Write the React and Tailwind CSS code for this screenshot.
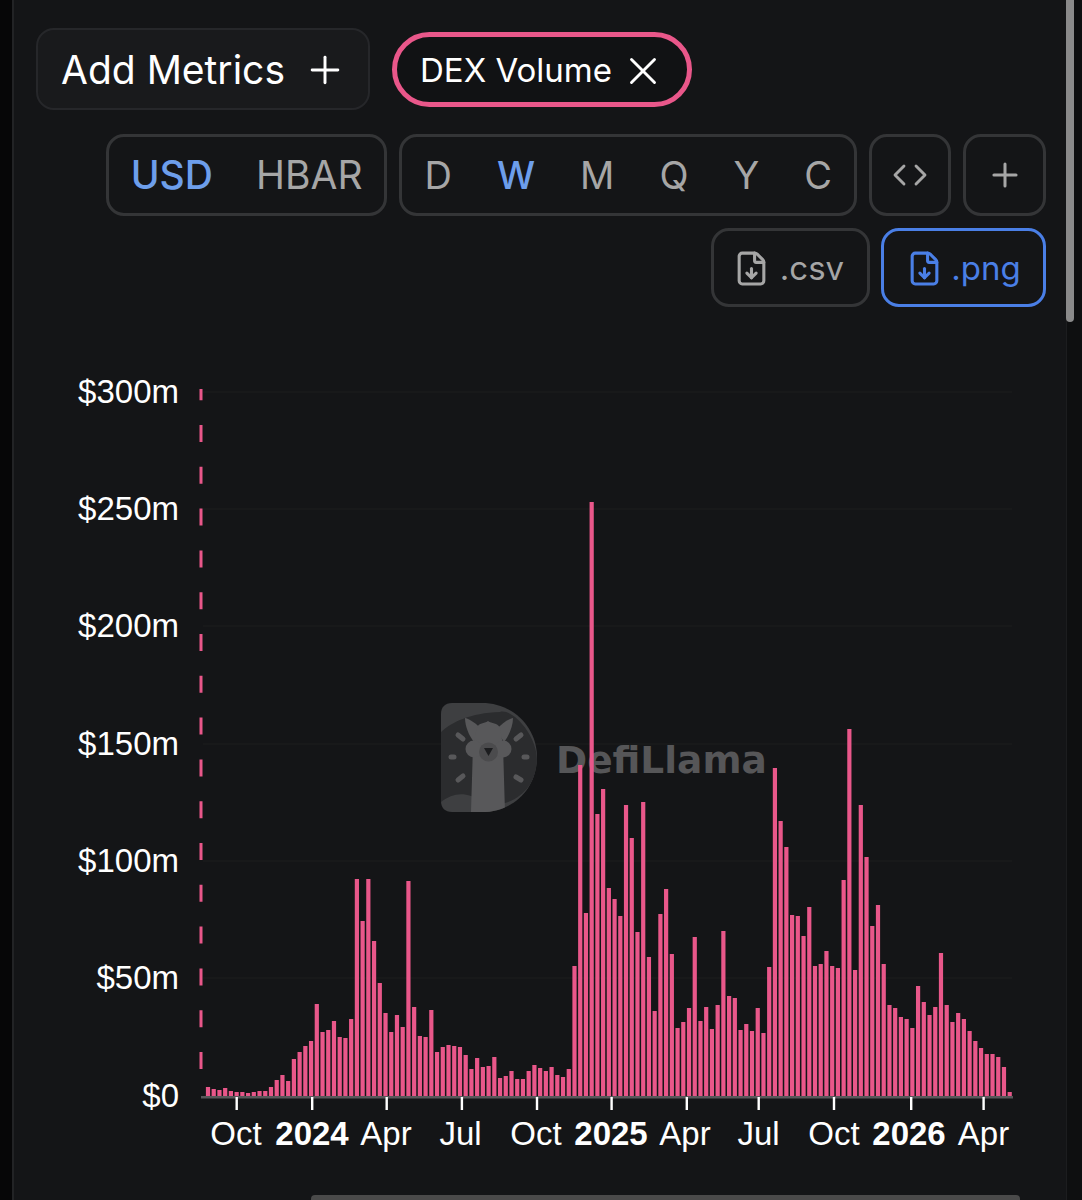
import React from "react";
import { Code, FileDown, Plus, X } from "lucide-react";

// bar heights in px, read off the chart (baseline y = 1096)
const bars = [
  9, 7, 6, 8, 5, 4, 4, 3, 4, 5, 5, 9, 16, 21, 15, 37, 44, 50, 55, 92, 64, 66, 75, 59, 58, 77, 217, 175, 217, 155, 113, 83, 64, 81, 69, 215, 89, 60, 59, 86, 44, 49, 51, 50, 49, 41, 27, 38, 29, 30,
  39, 18, 20, 25, 17, 17, 25, 31, 28, 25, 29, 21, 19, 27, 130, 331, 183, 594, 282, 307, 208, 197, 180, 291, 258, 164, 294, 139, 85, 182, 207, 142, 68, 74, 88, 159, 75, 89, 67, 91, 165, 100, 98, 66, 72, 65, 88, 63, 129,
  328, 275, 249, 181, 180, 160, 189, 130, 132, 145, 130, 128, 216, 367, 126, 291, 239, 170, 191, 132, 91, 88, 79, 77, 68, 110, 94, 81, 89, 143, 91, 74, 83, 77, 65, 55, 48, 42, 42, 39, 29, 4,
];

const yLabels = [
  { text: "$300m", y: 403 },
  { text: "$250m", y: 520 },
  { text: "$200m", y: 637 },
  { text: "$150m", y: 755 },
  { text: "$100m", y: 872 },
  { text: "$50m", y: 989 },
  { text: "$0", y: 1107 },
];

const xLabels = [
  { text: "Oct", x: 236, tick: 236.5 },
  { text: "2024", x: 312, tick: 312, bold: true },
  { text: "Apr", x: 386, tick: 386.5 },
  { text: "Jul", x: 460.5, tick: 461.7 },
  { text: "Oct", x: 536, tick: 536.8 },
  { text: "2025", x: 611, tick: 611.4, bold: true },
  { text: "Apr", x: 685, tick: 686.6 },
  { text: "Jul", x: 758.5, tick: 758.5 },
  { text: "Oct", x: 834, tick: 833.8 },
  { text: "2026", x: 909, tick: 911, bold: true },
  { text: "Apr", x: 983.5, tick: 983.4 },
];

const gridLines = [392, 509, 626, 744, 861, 978];

function Watermark() {
  return (
    <g>
      <clipPath id="logo-d">
        <path d="M452 703 H482 C514 703 537 728 537 757 C537 788 514 812 482 812 H452 C445 812 441 808 441 801 V714 C441 707 445 703 452 703 Z" />
      </clipPath>
      <g clipPath="url(#logo-d)">
        <rect x="440" y="702" width="98" height="111" fill="#3e3f41" />
        <path d="M441 732 C452 722 470 713 500 712 C512 708 537 735 537 760 C537 780 525 797 505 803 L471 796 C460 792 450 795 441 802 Z" fill="#2b2c2e" />
        <g fill="#58585a">
          <path d="M465 718 C470 719 477 724 482 730 L474 742 C469 736 465 726 465 718 Z" />
          <path d="M513 718 C508 719 501 724 496 730 L504 742 C509 736 513 726 513 718 Z" />
          <path d="M477 728 C479 722 484 724 488 721 C492 724 497 722 500 728 L503 745 L505 812 H471 L473 745 Z" />
          <circle cx="474" cy="749" r="8.5" />
          <circle cx="503" cy="749" r="8.5" />
        </g>
        <circle cx="488.5" cy="752" r="9.5" fill="#4b4b4d" />
        <path d="M484 748 H493 L488.5 756 Z" fill="#1c1d1f" />
        <g stroke="#58585a" strokeWidth="5" strokeLinecap="round">
          <path d="M458 735 L463 739" />
          <path d="M516 739 L521 735" />
          <path d="M451 757 L454 757" />
          <path d="M524 757 L527 757" />
          <path d="M458 780 L463 776" />
          <path d="M516 777 L521 780" />
        </g>
      </g>
      <text x="556" y="773" fontSize="37.5" fontWeight="700" fill="#565658" className="[font-family:'DejaVu_Sans',sans-serif]">
        DefiLlama
      </text>
    </g>
  );
}

function Chart() {
  const pitch = (1009.7 - 208) / (bars.length - 1);
  return (
    <svg viewBox="14 330 1052 870" className="block w-[1052px] h-[870px]">
      {gridLines.map((y) => (
        <line key={y} x1="203" x2="1012" y1={y} y2={y} stroke="#1a1b1d" strokeWidth="1.5" />
      ))}
      <Watermark />
      <line x1="201" x2="201" y1="1069" y2="389" stroke="#e9578a" strokeWidth="3" strokeDasharray="17 24.8" />
      {bars.map((h, i) => (
        <rect key={i} x={208 + i * pitch - 2.1} y={1096 - h} width="4.2" height={h} fill="#e9578a" />
      ))}
      <rect x="201" y="1096" width="812" height="2.5" fill="#58585a" />
      {xLabels.map((l) => (
        <rect key={l.tick} x={l.tick - 1} y="1097" width="2.4" height="13" fill="#ffffff" />
      ))}
      <g fill="#ffffff" fontSize="33" className="[font-family:'Liberation_Sans',Arial,sans-serif]">
        {yLabels.map((l) => (
          <text key={l.text} x="179" y={l.y} textAnchor="end">
            {l.text}
          </text>
        ))}
        {xLabels.map((l) => (
          <text key={l.tick} x={l.x} y="1145" textAnchor="middle" fontWeight={l.bold ? 700 : 400}>
            {l.text}
          </text>
        ))}
      </g>
    </svg>
  );
}

export default function App() {
  return (
    <div className="relative flex w-[1082px] h-[1200px] overflow-hidden bg-black [font-family:Inter,sans-serif]">
      <div className="w-3 shrink-0 bg-[#060607]" />
      <div className="w-[1054px] shrink-0 border-l-2 border-[#222325] bg-[#141517]">
        <div className="flex items-center gap-[22px] pl-[22px] pt-7">
          <button className="flex h-[82px] w-[334px] items-center gap-[18px] rounded-[18px] border-2 border-[#26272a] bg-[#191a1c] pl-[23px] pt-[2px] text-[39px] text-white">
            Add Metrics
            <Plus size={44} strokeWidth={1.6} />
          </button>
          <button className="flex h-[75px] w-[300px] items-center gap-[8px] rounded-full border-[5px] border-[#e9578a] bg-[#111214] pl-[23px] pt-[3px] text-[33px] text-white">
            DEX Volume
            <X size={46} strokeWidth={1.5} className="-mr-3" />
          </button>
        </div>

        <div className="mt-6 flex justify-end gap-3 pr-5 text-[38px] text-[#a6a6a6]">
          <div className="flex h-[82px] items-center gap-[43px] rounded-[18px] border-[3px] border-[#343537] px-[22px] text-[39px]">
            <span className="font-medium text-[#6d9eeb]">USD</span>
            <span>HBAR</span>
          </div>
          <div className="flex h-[82px] items-center gap-[45px] rounded-[18px] border-[3px] border-[#343537] px-[22px]">
            <span>D</span>
            <span className="font-medium text-[#6d9eeb]">W</span>
            <span>M</span>
            <span>Q</span>
            <span>Y</span>
            <span>C</span>
          </div>
          <button className="flex h-[82px] w-[82px] items-center justify-center rounded-[18px] border-[3px] border-[#343537]">
            <Code size={36} strokeWidth={1.9} />
          </button>
          <button className="flex h-[82px] w-[83px] items-center justify-center rounded-[18px] border-[3px] border-[#343537]">
            <Plus size={38} strokeWidth={1.9} />
          </button>
        </div>

        <div className="mt-3 flex justify-end gap-[11px] pr-5 text-[33px]">
          <button className="flex h-[79px] w-[159px] items-center justify-center gap-[10px] rounded-[18px] border-[3px] border-[#343537] pr-1 pt-[2px] text-[#a6a6a6]">
            <FileDown size={37} strokeWidth={2} />
            .csv
          </button>
          <button className="flex h-[79px] w-[165px] items-center justify-center gap-[8px] rounded-[18px] border-[3px] border-[#4a7fe6] pt-[2px] text-[#4a7fe6]">
            <FileDown size={37} strokeWidth={2} />
            .png
          </button>
        </div>

        <div className="mt-[23px]">
          <Chart />
        </div>
      </div>
      <div className="flex-1 border-l border-[#1c1d1f] bg-[#0e0f10]" />

      {/* overlay scrollbars */}
      <div className="absolute left-[1066px] top-0 h-[322px] w-2 rounded-b-full bg-[#8a8a8a]" />
      <div className="absolute bottom-0 left-[311px] h-[5px] w-[709px] rounded-t-[4px] bg-[#4a4a4a]" />
    </div>
  );
}
